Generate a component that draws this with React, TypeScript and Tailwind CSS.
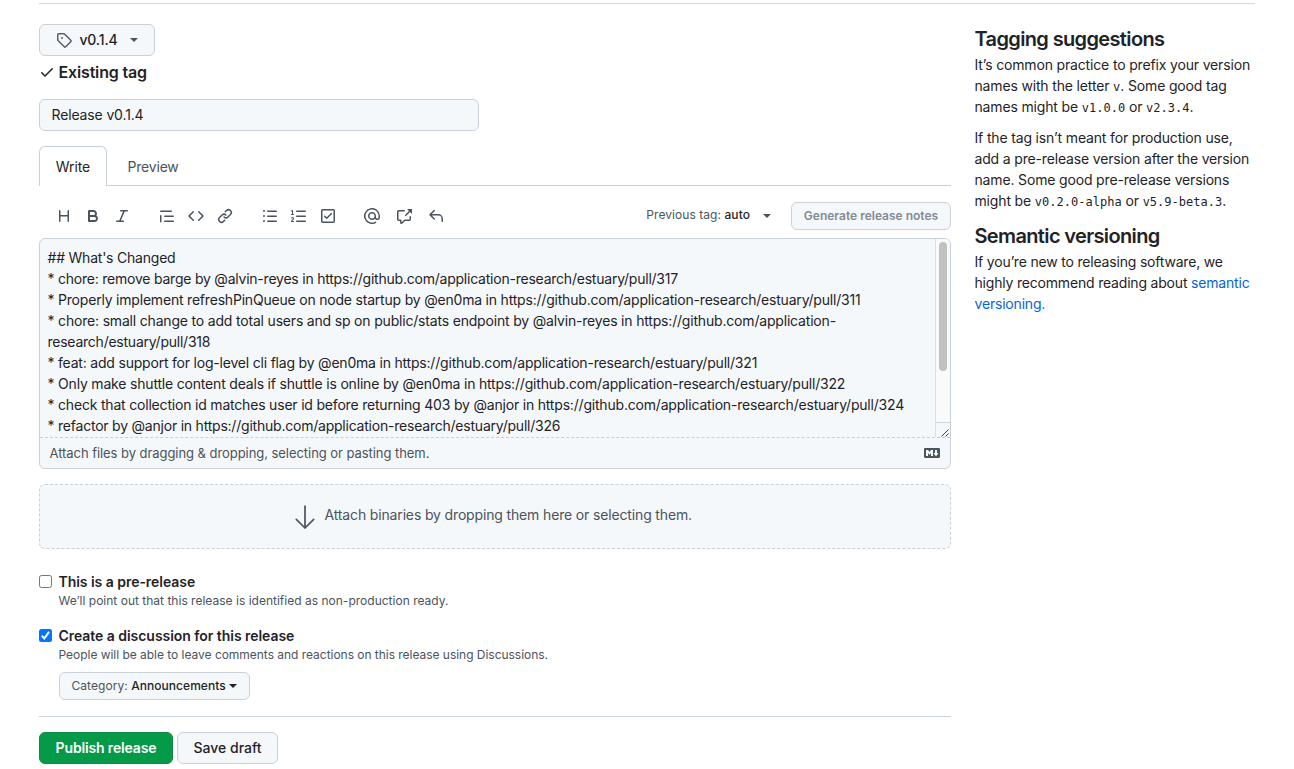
import React from "react";

const paths = {
  tag: "M2.5 7.775V2.75a.25.25 0 01.25-.25h5.025a.25.25 0 01.177.073l6.25 6.25a.25.25 0 010 .354l-5.025 5.025a.25.25 0 01-.354 0l-6.25-6.25a.25.25 0 01-.073-.177zm-1.5 0V2.75C1 1.784 1.784 1 2.75 1h5.025c.464 0 .91.184 1.238.513l6.25 6.25a1.75 1.75 0 010 2.474l-5.026 5.026a1.75 1.75 0 01-2.474 0l-6.25-6.25A1.75 1.75 0 011 7.775zM6 5a1 1 0 100 2 1 1 0 000-2z",
  check: "M13.78 4.22a.75.75 0 010 1.06l-7.25 7.25a.75.75 0 01-1.06 0L2.22 9.28a.75.75 0 011.06-1.06L6 10.94l6.72-6.72a.75.75 0 011.06 0z",
  heading: "M3.75 2a.75.75 0 01.75.75V7h7V2.75a.75.75 0 011.5 0v10.5a.75.75 0 01-1.5 0V8.5h-7v4.75a.75.75 0 01-1.5 0V2.75A.75.75 0 013.75 2z",
  bold: "M4 2a1 1 0 00-1 1v10a1 1 0 001 1h5.5a3.5 3.5 0 001.852-6.47A3.5 3.5 0 008.5 2H4zm4.5 5a1.5 1.5 0 100-3H5v3h3.5zM5 9v3h4.5a1.5 1.5 0 000-3H5z",
  italic: "M6 2.75A.75.75 0 016.75 2h6.5a.75.75 0 010 1.5h-2.505l-3.858 9H9.25a.75.75 0 010 1.5h-6.5a.75.75 0 010-1.5h2.505l3.858-9H6.75A.75.75 0 016 2.75z",
  quote: "M1.75 2.5a.75.75 0 000 1.5h10.5a.75.75 0 000-1.5H1.75zm4 5a.75.75 0 000 1.5h8.5a.75.75 0 000-1.5h-8.5zm0 5a.75.75 0 000 1.5h8.5a.75.75 0 000-1.5h-8.5zM2.5 7.75a.75.75 0 00-1.5 0v6a.75.75 0 001.5 0v-6z",
  code: "M4.72 3.22a.75.75 0 011.06 1.06L2.06 8l3.72 3.72a.75.75 0 11-1.06 1.06L.47 8.53a.75.75 0 010-1.06l4.25-4.25zm6.56 0a.75.75 0 10-1.06 1.06L13.94 8l-3.72 3.72a.75.75 0 101.06 1.06l4.25-4.25a.75.75 0 000-1.06l-4.25-4.25z",
  link: "M7.775 3.275a.75.75 0 001.06 1.06l1.25-1.25a2 2 0 112.83 2.83l-2.5 2.5a2 2 0 01-2.83 0 .75.75 0 00-1.06 1.06 3.5 3.5 0 004.95 0l2.5-2.5a3.5 3.5 0 00-4.95-4.95l-1.25 1.25zm-4.69 9.64a2 2 0 010-2.83l2.5-2.5a2 2 0 012.83 0 .75.75 0 001.06-1.06 3.5 3.5 0 00-4.95 0l-2.5 2.5a3.5 3.5 0 004.95 4.95l1.25-1.25a.75.75 0 00-1.06-1.06l-1.25 1.25a2 2 0 01-2.83 0z",
  unordered: "M2 4a1 1 0 100-2 1 1 0 000 2zm3.75-1.5a.75.75 0 000 1.5h8.5a.75.75 0 000-1.5h-8.5zm0 5a.75.75 0 000 1.5h8.5a.75.75 0 000-1.5h-8.5zm0 5a.75.75 0 000 1.5h8.5a.75.75 0 000-1.5h-8.5zM3 8a1 1 0 11-2 0 1 1 0 012 0zm-1 6a1 1 0 100-2 1 1 0 000 2z",
  ordered: "M2.003 2.5a.5.5 0 00-.723-.447l-1.003.5a.5.5 0 00.446.895l.28-.14V6H.5a.5.5 0 000 1h2.006a.5.5 0 100-1h-.503V2.5zM5 3.25a.75.75 0 01.75-.75h8.5a.75.75 0 010 1.5h-8.5A.75.75 0 015 3.25zm0 5a.75.75 0 01.75-.75h8.5a.75.75 0 010 1.5h-8.5A.75.75 0 015 8.25zm0 5a.75.75 0 01.75-.75h8.5a.75.75 0 010 1.5h-8.5a.75.75 0 01-.75-.75zM.924 10.32l.003-.004a.851.851 0 01.144-.153A.66.66 0 011.5 10c.195 0 .306.068.374.146a.57.57 0 01.128.376c0 .453-.269.682-.8 1.078l-.035.025C.692 11.98 0 12.495 0 13.5a.5.5 0 00.5.5h2.003a.5.5 0 000-1H1.146c.132-.197.351-.372.654-.597l.047-.035c.47-.35 1.156-.858 1.156-1.845 0-.365-.118-.744-.377-1.038-.268-.303-.658-.484-1.126-.484-.48 0-.84.202-1.068.392a1.858 1.858 0 00-.348.384l-.007.011-.002.004-.001.002-.001.001a.5.5 0 00.851.525z",
  tasklist: "M2.5 2.75a.25.25 0 01.25-.25h10.5a.25.25 0 01.25.25v10.5a.25.25 0 01-.25.25H2.75a.25.25 0 01-.25-.25V2.75zM2.75 1A1.75 1.75 0 001 2.75v10.5c0 .966.784 1.75 1.75 1.75h10.5A1.75 1.75 0 0015 13.25V2.75A1.75 1.75 0 0013.25 1H2.75zm9.03 5.28a.75.75 0 00-1.06-1.06L6.75 9.19 5.28 7.72a.75.75 0 00-1.06 1.06l2 2a.75.75 0 001.06 0l4.5-4.5z",
  mention: "M4.75 2.37a6.5 6.5 0 006.5 11.26.75.75 0 01.75 1.298 8 8 0 113.994-7.273.754.754 0 01.006.095v1.5a2.75 2.75 0 01-5.072 1.475A4 4 0 1112 8v1.25a1.25 1.25 0 002.5 0V7.867a6.5 6.5 0 00-9.75-5.496V2.37zM10.5 8a2.5 2.5 0 10-5 0 2.5 2.5 0 005 0z",
  crossReference: "M16 1.25v4.146a.25.25 0 01-.427.177L14.03 4.03l-3.75 3.75a.75.75 0 11-1.06-1.06l3.75-3.75-1.543-1.543A.25.25 0 0111.604 1h4.146a.25.25 0 01.25.25zM2.75 3.5a.25.25 0 00-.25.25v7.5c0 .138.112.25.25.25h2a.75.75 0 01.75.75v2.19l2.72-2.72a.75.75 0 01.53-.22h4.5a.25.25 0 00.25-.25v-2.5a.75.75 0 111.5 0v2.5A1.75 1.75 0 0113.25 13H9.06l-2.573 2.573A1.457 1.457 0 014 14.543V13H2.75A1.75 1.75 0 011 11.25v-7.5C1 2.784 1.784 2 2.75 2h5.5a.75.75 0 010 1.5h-5.5z",
  reply: "M6.78 1.97a.75.75 0 010 1.06L3.81 6h6.44A4.75 4.75 0 0115 10.75v2.5a.75.75 0 01-1.5 0v-2.5a3.25 3.25 0 00-3.25-3.25H3.81l2.97 2.97a.75.75 0 11-1.06 1.06L1.47 7.28a.75.75 0 010-1.06l4.25-4.25a.75.75 0 011.06 0z",
  markdown: "M14.85 3H1.15C.52 3 0 3.52 0 4.15v7.69C0 12.48.52 13 1.15 13h13.69c.64 0 1.15-.52 1.15-1.15v-7.7C16 3.52 15.48 3 14.85 3zM9 11H7V8L5.5 9.92 4 8v3H2V5h2l1.5 2L7 5h2v6zm2.99.5L9.5 8H11V5h2v3h1.5l-2.51 3.5z",
};

function Icon({ name, className = "size-4" }: { name: keyof typeof paths; className?: string }) {
  return (
    <svg viewBox="0 0 16 16" fill="currentColor" fillRule="evenodd" className={`shrink-0 ${className}`}>
      <path d={paths[name]} />
    </svg>
  );
}

function Caret({ className = "" }: { className?: string }) {
  return (
    <svg viewBox="0 0 8 4" fill="currentColor" className={`h-1 w-2 shrink-0 ${className}`}>
      <path d="M0 0h8L4 4z" />
    </svg>
  );
}

const toolbar: (keyof typeof paths)[][] = [
  ["heading", "bold", "italic"],
  ["quote", "code", "link"],
  ["unordered", "ordered", "tasklist"],
];

const notes: { text: string; tracking: string }[] = [
  { text: "## What's Changed", tracking: "tracking-[-0.22px]" },
  { text: "* chore: remove barge by @alvin-reyes in https://github.com/application-research/estuary/pull/317", tracking: "tracking-[-0.225px]" },
  { text: "* Properly implement refreshPinQueue on node startup by @en0ma in https://github.com/application-research/estuary/pull/311", tracking: "tracking-[-0.202px]" },
  { text: "* chore: small change to add total users and sp on public/stats endpoint by @alvin-reyes in https://github.com/application-", tracking: "tracking-[-0.185px]" },
  { text: "research/estuary/pull/318", tracking: "tracking-[-0.24px]" },
  { text: "* feat: add support for log-level cli flag by @en0ma in https://github.com/application-research/estuary/pull/321", tracking: "tracking-[-0.203px]" },
  { text: "* Only make shuttle content deals if shuttle is online by @en0ma in https://github.com/application-research/estuary/pull/322", tracking: "tracking-[-0.19px]" },
  { text: "* check that collection id matches user id before returning 403 by @anjor in https://github.com/application-research/estuary/pull/324", tracking: "tracking-[-0.194px]" },
  { text: "* refactor by @anjor in https://github.com/application-research/estuary/pull/326", tracking: "tracking-[-0.22px]" },
];

function Mono({ children }: { children: React.ReactNode }) {
  return <code className="font-['DejaVu_Sans_Mono',monospace] text-[12px] leading-none tracking-[0.02px]">{children}</code>;
}

function Editor() {
  return (
    <div className="flex h-[231px] flex-col overflow-hidden rounded-md border border-[#c8d1da] bg-[#f5f8fa]">
      <div className="flex h-[198px] shrink-0">
        <div className="min-w-0 grow overflow-hidden pt-2 pl-[7.5px] text-sm leading-[21px] whitespace-nowrap">
          {notes.map((line) => (
            <div key={line.text} className={line.tracking}>
              {line.text}
            </div>
          ))}
        </div>
        <div className="flex w-[15px] flex-col border-l border-[#dfdfdf] bg-[#fafafa]">
          <div className="grow px-[3px] pt-[3px]">
            <div className="h-[129px] w-2 rounded-full bg-[#c1c1c1]" />
          </div>
          <div className="flex h-[15px] items-end justify-end border-t border-[#d5d5d5] bg-[#f5f8fa]">
            <svg viewBox="0 0 8 8" className="mr-px size-2" stroke="#444" fill="none">
              <path d="M0.5 7.5l7-7M4.5 7.5l3-3" />
            </svg>
          </div>
        </div>
      </div>
      <div className="flex grow items-center justify-between border-t border-dashed border-[#c8d1da] pr-2.5 pl-[9.5px] text-[13px] tracking-[-0.055px] text-[#4b535d]">
        <span className="pt-px">Attach files by dragging &amp; dropping, selecting or pasting them.</span>
        <Icon name="markdown" />
      </div>
    </div>
  );
}

export default function App() {
  return (
    <div className="h-[769px] w-[1294px] overflow-hidden bg-white pt-[3px] pr-[39px] pl-[39px] font-['Inter',sans-serif] text-sm text-[#1f2328]">
      <div className="border-t border-[#d3d8dd]" />
      <div className="flex gap-6 pt-5">
        <main className="w-[912px] shrink-0">
          <button className="flex h-8 w-[116px] items-center rounded-md border border-[#ccd1d6] bg-[#f5f8fa] pl-4 font-medium">
            <Icon name="tag" className="size-4 text-[#57606a]" />
            <span className="ml-[7px] w-[39px] tracking-[-0.01em]">v0.1.4</span>
            <Caret className="ml-3 text-[#4b535d]" />
          </button>
          <div className="flex h-8 items-center text-base font-semibold">
            <Icon name="check" />
            <span className="ml-[3.5px] tracking-[-0.01em]">Existing tag</span>
          </div>
          <div className="mt-[11px] flex h-8 w-[440px] items-center rounded-md border border-[#c8d1da] bg-[#f5f8fa] px-[11.5px] tracking-[-0.01em]">
            Release v0.1.4
          </div>
          <div className="mt-[15px] flex h-10 border-b border-[#c8d1da]">
            <div className="flex h-10 w-[68px] items-center justify-center rounded-t-md border border-b-0 border-[#c8d1da] bg-white tracking-[-0.1px]">
              Write
            </div>
            <div className="flex items-center pt-0.5 pl-[20.5px] tracking-[-0.2px] text-[#4b535d]">Preview</div>
          </div>
          <div className="flex h-[52px] items-center">
            <div className="flex items-center gap-[29px] pt-2 pl-[17px] text-[#4b535d]">
              {toolbar.map((group, i) => (
                <div key={i} className="flex gap-[13px]">
                  {group.map((name) => (
                    <Icon key={name} name={name} />
                  ))}
                </div>
              ))}
              <div className="-ml-px flex gap-4">
                <Icon name="mention" />
                <Icon name="crossReference" />
                <Icon name="reply" />
              </div>
            </div>
            <div className="ml-auto flex items-center pt-[7px]">
              <span className="pb-0.5 text-xs tracking-[0.06px] text-[#4b535d]">
                Previous tag: <span className="font-medium text-[#1f2328]">auto</span>
              </span>
              <Caret className="ml-[13px] text-[#4b535d]" />
              <button className="ml-5 h-7 w-[160px] rounded-md border border-[#ccd1d6] bg-[#f5f8fa] text-xs font-semibold text-[#818b96]">
                Generate release notes
              </button>
            </div>
          </div>
          <Editor />
          <div className="mt-[15px] flex h-[65px] items-center rounded-md border border-dashed border-[#c8d1da] bg-[#f5f8fa] pl-[255px] text-[#4b535d]">
            <svg viewBox="0 0 20 24" className="h-6 w-5" fill="none" stroke="currentColor" strokeWidth="1.7" strokeLinecap="round" strokeLinejoin="round">
              <path d="M10 1v22M1.3 14.3L10 23l8.7-8.7" />
            </svg>
            <span className="ml-[9.5px] pb-1 tracking-[-0.15px]">Attach binaries by dropping them here or selecting them.</span>
          </div>
          <div className="mt-[22px] flex">
            <div className="mt-1 size-[13px] rounded-[2.5px] border border-[#767676] bg-white" />
            <div className="ml-[6.5px]">
              <div className="leading-[22px] font-semibold tracking-[-0.04px]">This is a pre-release</div>
              <div className="-mt-px mb-px text-xs leading-[18px] tracking-[0.01px] text-[#4b535d]">We’ll point out that this release is identified as non-production ready.</div>
            </div>
          </div>
          <div className="mt-3.5 flex">
            <div className="mt-1 flex size-[13px] items-center justify-center rounded-[2.5px] bg-[#0075ff]">
              <svg viewBox="0 0 13 13" className="size-[13px]" fill="none" stroke="#fff" strokeWidth="2">
                <path d="M2.8 6.8l2.5 2.6 4.8-6.6" />
              </svg>
            </div>
            <div className="ml-[6.5px]">
              <div className="leading-[22px] font-semibold tracking-[-0.045px]">Create a discussion for this release</div>
              <div className="-mt-px text-xs leading-[18px] tracking-[-0.03px] text-[#4b535d]">People will be able to leave comments and reactions on this release using Discussions.</div>
              <button className="mt-2 ml-[0.5px] flex h-7 w-[191px] items-center rounded-md border border-[#ccd1d6] bg-[#f5f8fa] pl-[11.5px] text-xs tracking-[0.05px] text-[#4b535d]">
                Category:&nbsp;<span className="font-medium text-[#1f2328]">Announcements</span>
                <Caret className="ml-[3px] text-[#1f2328]" />
              </button>
            </div>
          </div>
          <div className="mt-4 border-t border-[#ccd5dd]" />
          <div className="mt-[15px] flex gap-1">
            <button className="h-8 w-[134px] rounded-md border border-[#108a42] bg-[#059a48] font-semibold tracking-[-0.15px] text-white">
              Publish release
            </button>
            <button className="h-8 w-[101px] rounded-md border border-[#ccd1d6] bg-[#f5f8fa] font-medium">Save draft</button>
          </div>
        </main>
        <aside className="-ml-[0.5px] w-[280px] leading-[21px] whitespace-nowrap">
          <h2 className="text-xl leading-[30px] font-semibold tracking-[-0.032em]">Tagging suggestions</h2>
          <p className="tracking-[-0.16px]">
            It’s common practice to prefix your version
            <br />
            names with the letter <Mono>v</Mono>. Some good tag
            <br />
            names might be <Mono>v1.0.0</Mono> or <Mono>v2.3.4</Mono>.
          </p>
          <p className="mt-2.5 tracking-[-0.16px]">
            If the tag isn’t meant for production use,
            <br />
            add a pre-release version after the version
            <br />
            name. Some good pre-release versions
            <br />
            might be <Mono>v0.2.0-alpha</Mono> or <Mono>v5.9-beta.3</Mono>.
          </p>
          <h2 className="mt-2.5 text-xl leading-[30px] font-semibold tracking-[-0.032em]">Semantic versioning</h2>
          <p className="tracking-[-0.19px]">
            If you’re new to releasing software, we
            <br />
            highly recommend reading about <a className="text-[#0366d6]">semantic</a>
            <br />
            <a className="text-[#0366d6]">versioning.</a>
          </p>
        </aside>
      </div>
    </div>
  );
}
